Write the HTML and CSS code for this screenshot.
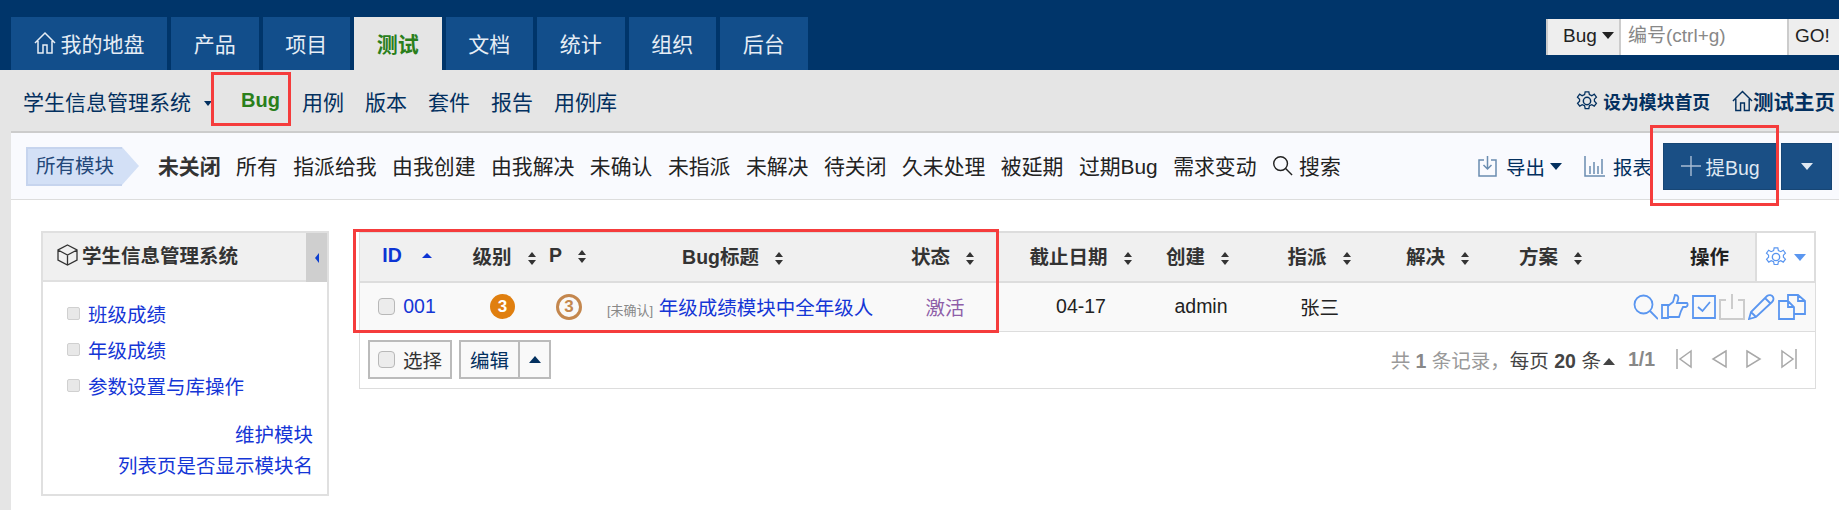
FILE: index.html
```html
<!DOCTYPE html>
<html>
<head>
    <meta charset="utf-8">
    <title>Bug列表</title>
    <link rel="stylesheet" href="styles.css">
</head>
<body>
    <header class="topbar">
        <nav class="tabs">
            <a class="tab tab-first">
                <svg class="ico" width="22" height="24" viewBox="0 0 22 24"><path d="M1 12 11 2l10 10M4 10v12h5v-8h4v8h5V10" fill="none" stroke="currentColor" stroke-width="1.5"/></svg>
                我的地盘
            </a>
            <a class="tab">产品</a>
            <a class="tab">项目</a>
            <a class="tab active">测试</a>
            <a class="tab">文档</a>
            <a class="tab">统计</a>
            <a class="tab">组织</a>
            <a class="tab">后台</a>
        </nav>
        <div class="quick-search">
            <div class="qs-type">Bug <i class="caret"></i></div>
            <div class="qs-input">编号(ctrl+g)</div>
            <div class="qs-go">GO!</div>
        </div>
    </header>

    <div class="subnav">
        <div class="subnav-left">
            <a class="product-name">学生信息管理系统 <i class="caret caret-small"></i></a>
            <a class="sub-bug">Bug</a>
            <a>用例</a>
            <a>版本</a>
            <a>套件</a>
            <a>报告</a>
            <a>用例库</a>
        </div>
        <div class="subnav-right">
            <a class="set-home">
                <svg width="22" height="22" viewBox="0 0 24 24"><circle cx="12" cy="12" r="4" fill="none" stroke="currentColor" stroke-width="1.6"/><path d="M10 2h4l.6 3 2.6 1.2 2.7-1.6 2.4 3.2-2.2 2.2v2.2l2.2 2.2-2.4 3.2-2.7-1.6-2.6 1.2-.6 3h-4l-.6-3-2.6-1.2-2.7 1.6-2.4-3.2 2.2-2.2V10L1.600 7.800 4 4.600l2.700 1.600L9.400 5z" fill="none" stroke="currentColor" stroke-width="1.4"/></svg>
                设为模块首页
            </a>
            <a class="test-home">
                <svg width="21" height="24" viewBox="0 0 22 24"><path d="M1 12 11 2l10 10M4 10v12h5v-8h4v8h5V10" fill="none" stroke="currentColor" stroke-width="1.5"/></svg>测试主页
            </a>
        </div>
    </div>

    <div class="filterbar">
        <div class="module-label">所有模块</div>
        <div class="filters">
            <a class="current">未关闭</a>
            <a>所有</a>
            <a>指派给我</a>
            <a>由我创建</a>
            <a>由我解决</a>
            <a>未确认</a>
            <a>未指派</a>
            <a>未解决</a>
            <a>待关闭</a>
            <a>久未处理</a>
            <a>被延期</a>
            <a>过期Bug</a>
            <a>需求变动</a>
            <a class="search-link">
                <svg width="21" height="21" viewBox="0 0 22 22"><circle cx="9" cy="9" r="7.200" fill="none" stroke="currentColor" stroke-width="1.500"/><path d="m14 14 7 7" stroke="currentColor" stroke-width="1.500"/></svg>
                搜索
            </a>
        </div>
        <div class="actions">
            <a class="act">
                <svg class="act-ico" width="20" height="21" viewBox="0 0 20 21"><path d="M6 4H1v16h17V4h-5M9.500 0v12M5.500 9l4 4 4-4" fill="none" stroke="currentColor" stroke-width="1.500"/></svg>
                <span>导出</span><i class="caret"></i>
            </a>
            <a class="act act-report">
                <svg class="act-ico" width="21" height="21" viewBox="0 0 21 21"><path d="M1 0v20h20M6 10v8M10 6v12M14 10v8M18 3v15" fill="none" stroke="currentColor" stroke-width="1.500"/></svg>
                <span>报表</span>
            </a>
            <div class="btn-group">
                <a class="btn-create">
                    <svg class="plus" width="20" height="20" viewBox="0 0 20 20"><path d="M10 0v20M0 10h20" stroke="currentColor" stroke-width="1.400"/></svg>
                    提Bug
                </a>
                <a class="btn-more"><i class="caret caret-white"></i></a>
            </div>
        </div>
    </div>

    <main class="content">
        <aside class="side">
            <div class="side-head">
                <div class="side-title">
                    <svg width="21" height="22" viewBox="0 0 21 22"><path d="M10.500 1 20 6v10l-9.500 5L1 16V6zM1 6l9.500 5L20 6M10.500 11v10" fill="none" stroke="#333" stroke-width="1.300"/></svg>
                    学生信息管理系统
                </div>
                <div class="side-toggle"><i></i></div>
            </div>
            <ul class="tree">
                <li>班级成绩</li>
                <li>年级成绩</li>
                <li>参数设置与库操作</li>
            </ul>
            <div class="side-links">
                <a>维护模块</a>
                <a>列表页是否显示模块名</a>
            </div>
        </aside>

        <section class="list">
            <table class="bugs">
                <colgroup>
                    <col class="c-id"><col class="c-pri"><col class="c-p"><col class="c-title"><col class="c-status"><col class="c-date"><col class="c-create"><col class="c-assign"><col class="c-resolve"><col class="c-plan"><col class="c-act"><col class="c-set">
                </colgroup>
                <thead>
                    <tr>
                        <th class="th-id">ID<i class="sort-up"></i></th>
                        <th class="th-pri">级别<i class="sort"></i></th>
                        <th>P<i class="sort"></i></th>
                        <th>Bug标题<i class="sort"></i></th>
                        <th class="th-status">状态<i class="sort"></i></th>
                        <th>截止日期<i class="sort"></i></th>
                        <th class="th-create">创建<i class="sort"></i></th>
                        <th>指派<i class="sort"></i></th>
                        <th class="th-resolve">解决<i class="sort"></i></th>
                        <th class="th-plan">方案<i class="sort"></i></th>
                        <th class="th-act">操作</th>
                        <th class="th-set">
                            <svg width="22" height="24" viewBox="0 0 24 24"><circle cx="12" cy="12" r="4" fill="none" stroke="currentColor" stroke-width="1.500"/><path d="M10 2h4l.6 3 2.600 1.200 2.700-1.600 2.400 3.200-2.200 2.200v2.200l2.200 2.200-2.400 3.200-2.700-1.600-2.600 1.200-.6 3h-4l-.6-3-2.600-1.200-2.700 1.600-2.400-3.200 2.200-2.200V10L1.600 7.800 4 4.600l2.700 1.600L9.400 5z" fill="none" stroke="currentColor" stroke-width="1.300"/></svg>
                            <i class="caret caret-blue"></i>
                        </th>
                    </tr>
                </thead>
                <tbody>
                    <tr>
                        <td class="td-id"><span class="check"></span><a>001</a></td>
                        <td><span class="sev">3</span></td>
                        <td><span class="pri">3</span></td>
                        <td class="td-title"><small>[未确认]</small> <a>年级成绩模块中全年级人</a></td>
                        <td class="td-status">激活</td>
                        <td>04-17</td>
                        <td>admin</td>
                        <td>张三</td>
                        <td></td>
                        <td></td>
                        <td colspan="2" class="td-act">
                            <div class="row-acts">
                                <svg width="25" height="26" viewBox="0 0 25 26"><circle cx="10.500" cy="10.500" r="9" fill="none" stroke="currentColor" stroke-width="1.800"/><path d="m17 17 8 8" stroke="currentColor" stroke-width="1.800"/></svg>
                                <svg width="28" height="26" viewBox="0 0 28 26"><path d="M1 11h6v13H1zM7 12l5-4 2-7c3 0 4 2 3 5l-1 3h10c1 1 1 3-1 4h-3l-2 4-2 6H7" fill="none" stroke="currentColor" stroke-width="1.800"/></svg>
                                <svg width="24" height="26" viewBox="0 0 24 26"><path d="M1 2h22v22H1z" fill="none" stroke="currentColor" stroke-width="1.800"/><path d="m6 13 4.500 4L18 8" fill="none" stroke="currentColor" stroke-width="1.800"/></svg>
                                <svg class="off" width="26" height="26" viewBox="0 0 26 26"><path d="M7 6H1v19h24V6h-6M13 0v15" fill="none" stroke="currentColor" stroke-width="2"/></svg>
                                <svg width="27" height="26" viewBox="0 0 27 26"><path d="M1 25l2-7L19 2c2-1.500 5-1 6 1s1 3-1 5L8 23zM3 18l5 5M17 4l6 6" fill="none" stroke="currentColor" stroke-width="1.800"/></svg>
                                <svg width="28" height="26" viewBox="0 0 28 26"><path d="M1 7h9l6 6v12H1zM10 7v6h6M10 7V1h10l7 6v13H16M20 1v6h7" fill="none" stroke="currentColor" stroke-width="1.800"/></svg>
                            </div>
                        </td>
                    </tr>
                </tbody>
            </table>
            <div class="pager">
                <div class="batch">
                    <a class="b-btn b-select"><span class="check"></span>选择</a>
                    <div class="b-group">
                        <a class="b-btn b-edit">编辑</a>
                        <a class="b-btn b-up"><i class="caret-up"></i></a>
                    </div>
                </div>
                <div class="pages">
                    <span class="count">共 <b>1</b> 条记录，</span>
                    <span class="per">每页 <b>20</b> 条<i class="caret-up caret-up-gray"></i></span>
                    <b class="page-no">1/1</b>
                    <div class="page-nav">
                        <svg width="16" height="20" viewBox="0 0 16 20"><path d="M1 0v20M15 2 4 10l11 8z" fill="none" stroke="currentColor" stroke-width="1.500"/></svg>
                        <svg width="16" height="20" viewBox="0 0 16 20"><path d="M15 2 2 10l13 8z" fill="none" stroke="currentColor" stroke-width="1.500"/></svg>
                        <svg width="16" height="20" viewBox="0 0 16 20"><path d="M1 2l13 8-13 8z" fill="none" stroke="currentColor" stroke-width="1.500"/></svg>
                        <svg width="16" height="20" viewBox="0 0 16 20"><path d="M15 0v20M1 2l11 8-11 8z" fill="none" stroke="currentColor" stroke-width="1.500"/></svg>
                    </div>
                </div>
            </div>
        </section>
    </main>

    <!-- red marks drawn over the screenshot -->
    <div class="mark mark-bug"></div>
    <div class="mark mark-create"></div>
    <div class="mark mark-table"></div>
</body>
</html>
```

FILE: styles.css
```css
* {
    box-sizing: border-box;
}

html, body {
    height: 510px;
    overflow: hidden;
}

body {
    margin: 0;
    background: #e5e5e5;
    color: #333;
    font-family: "Liberation Sans", "Noto Sans CJK SC", sans-serif;
    font-size: 19.5px;
    position: relative;
}

a {
    color: inherit;
    text-decoration: none;
}

.caret {
    display: inline-block;
    width: 0;
    height: 0;
    border-left: 6px solid transparent;
    border-right: 6px solid transparent;
    border-top: 7px solid #03305f;
}

.caret-small {
    border-left-width: 4px;
    border-right-width: 4px;
    border-top-width: 5px;
    margin-left: 7px;
    vertical-align: middle;
}

.caret-white { border-top-color: #dfe8f2; }
.caret-blue { border-top-color: #5a96f0; margin-left: 2px; vertical-align: middle; }

/* top bar */
.topbar {
    height: 70px;
    background: #00356a;
    display: flex;
    justify-content: space-between;
}

.tabs {
    display: flex;
    gap: 4px;
    padding: 17px 0 0 11px;
}

.tab {
    width: 87.500px;
    height: 53px;
    padding-bottom: 2px;
    background: #124e8b;
    color: #e6edf5;
    font-size: 21px;
    display: flex;
    align-items: center;
    justify-content: center;
    gap: 5px;
}

.tab-first { width: 156px; }

.tab.active {
    background: #e5e5e5;
    color: #2a7f1b;
    font-weight: bold;
}

.quick-search {
    display: flex;
    width: 293px;
    height: 36px;
    margin-top: 19px;
    line-height: 34px;
    font-size: 19px;
    color: #222;
    background: #eee;
}

.qs-type {
    width: 73px;
    padding-left: 15px;
    border-left: 2px solid #ccc;
    white-space: nowrap;
}

.qs-type .caret {
    border-top-color: #222;
    vertical-align: 3px;
}

.qs-input {
    width: 168px;
    padding-left: 7px;
    background: #fff;
    color: #888;
    border-left: 2px solid #ccc;
    white-space: nowrap;
}

.qs-go {
    flex: 1;
    padding-left: 6px;
    border-left: 2px solid #ccc;
}

/* second level menu */
.subnav {
    height: 61px;
    padding: 0 4px 0 23px;
    display: flex;
    justify-content: space-between;
    align-items: center;
    color: #03305f;
}

.subnav-left {
    display: flex;
    align-items: center;
    gap: 21px;
    font-size: 21px;
}

.product-name {
    width: 197px;
    white-space: nowrap;
}

.sub-bug {
    width: 40px;
    color: #2a7f1b;
    font-size: 20px;
    font-weight: bold;
}

.subnav-right {
    display: flex;
    align-items: center;
    gap: 22px;
    font-weight: bold;
}

.subnav-right a {
    display: flex;
    align-items: center;
}

.set-home {
    font-size: 17.800px;
    gap: 5px;
}

.test-home {
    font-size: 20.500px;
}

/* filter bar */
.filterbar {
    margin-left: 11px;
    height: 69px;
    background: #f9fafe;
    border-top: 2px solid #ccc;
    border-bottom: 1px solid #ddd;
    display: flex;
    align-items: center;
    padding-left: 15px;
    position: relative;
}

.module-label {
    position: relative;
    width: 96px;
    height: 39px;
    line-height: 35px;
    padding-left: 8px;
    background: #d3e0f6;
    border: 2px solid #c6d4ee;
    border-right: none;
    color: #23487a;
    flex: none;
}

.module-label::after {
    content: "";
    position: absolute;
    left: 94px;
    top: -2px;
    border-left: 17px solid #d3e0f6;
    border-top: 19.500px solid transparent;
    border-bottom: 19.500px solid transparent;
}

.filters {
    display: flex;
    align-items: center;
    gap: 15.500px;
    margin-left: 36px;
    padding-bottom: 2px;
    color: #222;
    font-size: 20.850px;
    white-space: nowrap;
}

.filters .current {
    font-weight: bold;
    color: #333;
}

.search-link {
    display: flex;
    align-items: center;
    gap: 6px;
}

.actions {
    margin-left: auto;
    display: flex;
    align-items: center;
    color: #03305f;
}

.act {
    display: flex;
    align-items: center;
    gap: 8px;
}

.act-ico {
    color: #6a8cb0;
}

.act .caret {
    margin-left: -3px;
}

.act-report {
    margin-left: 22px;
}

.btn-group {
    display: flex;
    gap: 5px;
    margin-left: 12px;
    margin-right: 8px;
}

.btn-create, .btn-more {
    height: 45px;
    background: #1a4f85;
    color: #dfe8f2;
    display: flex;
    align-items: center;
    justify-content: center;
    box-shadow: 0 0 0 1px #174675;
}

.btn-create {
    width: 113px;
    gap: 4px;
}

.plus {
    color: #a9bdd3;
}

.btn-more {
    width: 49px;
}

/* main area */
.content {
    margin-left: 11px;
    height: 311px;
    background: #fff;
    display: flex;
    align-items: flex-start;
    padding: 31px 0 0 30px;
}

.side {
    width: 288px;
    height: 265px;
    border: 2px solid #e0e0e0;
    flex: none;
}

.side-head {
    height: 49px;
    background: #f0f0f0;
    border-bottom: 2px solid #e0e0e0;
    display: flex;
    justify-content: space-between;
}

.side-title {
    display: flex;
    align-items: center;
    gap: 4px;
    padding: 0 0 4px 14px;
    font-weight: bold;
    white-space: nowrap;
}

.side-toggle {
    width: 21px;
    height: 49px;
    background: #cfcfcf;
    display: flex;
    align-items: center;
    justify-content: center;
}

.side-toggle i {
    border-right: 4px solid #0d3fcf;
    border-top: 5px solid transparent;
    border-bottom: 5px solid transparent;
}

.tree {
    list-style: none;
    margin: 15px 0 0;
    padding: 0 0 0 24px;
    color: #1536d6;
}

.tree li {
    height: 36px;
    line-height: 36px;
    padding-left: 21px;
    position: relative;
}

.tree li::before {
    content: "";
    position: absolute;
    left: 0;
    top: 10px;
    width: 11px;
    height: 11px;
    background: #e8e8e8;
    border: 1px solid #d0d0d0;
    border-radius: 2px;
}

.side-links {
    margin-top: 15px;
    padding-right: 14px;
    text-align: right;
    color: #1536d6;
    line-height: 31px;
}

.side-links a {
    display: block;
}

/* bug table */
.list {
    margin-left: 30px;
    width: 1457px;
    height: 158px;
    border: 1px solid #ddd;
    border-top: none;
}

.bugs {
    width: 1455px;
    table-layout: fixed;
    border-collapse: collapse;
}

.c-id { width: 94px; }
.c-pri { width: 95px; }
.c-p { width: 38px; }
.c-title { width: 292px; }
.c-status { width: 132px; }
.c-date { width: 140px; }
.c-create { width: 100px; }
.c-assign { width: 137px; }
.c-resolve { width: 104px; }
.c-plan { width: 114px; }
.c-act { width: 150px; }
.c-set { width: 59px; }

.bugs th {
    height: 50px;
    padding: 0 0 4px;
    background: #f0f0f0;
    border-top: 2px solid #ddd;
    border-bottom: 2px solid #ddd;
    font-weight: bold;
    white-space: nowrap;
    color: #333;
}

.bugs .th-id {
    color: #0d34d4;
}

.bugs .th-pri {
    padding-left: 6px;
}

.bugs .th-status {
    padding-right: 4px;
}

.bugs .th-create {
    padding-right: 6px;
}

.bugs .th-resolve {
    padding-right: 4px;
}

.bugs .th-plan {
    padding-left: 4px;
}

.bugs .th-act {
    text-align: right;
    padding-right: 26px;
    color: #222;
}

.bugs .th-set {
    padding: 0;
    background: #fff;
    border: 2px solid #ddd;
    color: #5a96f0;
    text-align: center;
}

.th-set svg {
    vertical-align: middle;
}

.sort {
    display: inline-block;
    width: 9px;
    height: 13px;
    margin-left: 16px;
    vertical-align: -1px;
    position: relative;
}

.sort::before, .sort::after {
    content: "";
    position: absolute;
    left: 0;
    border-left: 4.500px solid transparent;
    border-right: 4.500px solid transparent;
}

.sort::before {
    top: 0;
    border-bottom: 5px solid #333;
}

.sort::after {
    bottom: 0;
    border-top: 5px solid #333;
}

.sort-up {
    display: inline-block;
    margin-left: 20px;
    vertical-align: 4px;
    border-left: 5px solid transparent;
    border-right: 5px solid transparent;
    border-bottom: 5px solid #0d34d4;
}

.bugs td {
    height: 49px;
    padding: 0;
    background: #f9f9f9;
    border-bottom: 1px solid #ddd;
    text-align: center;
    color: #222;
    white-space: nowrap;
}

.td-id a {
    color: #1536d6;
}

.check {
    display: inline-block;
    width: 17px;
    height: 17px;
    margin-right: 8px;
    background: #ececec;
    border: 1px solid #b8b8b8;
    border-radius: 4px;
    vertical-align: -2px;
}

.sev, .pri {
    display: inline-flex;
    align-items: center;
    justify-content: center;
    border-radius: 50%;
    margin-left: 2px;
    line-height: 1;
}

.sev {
    width: 25px;
    height: 25px;
    background: #e07f0f;
    color: #fff;
    font-size: 17px;
    font-weight: bold;
}

.pri {
    width: 26px;
    height: 26px;
    border: 3px solid #c4874e;
    color: #c4874e;
    font-size: 17px;
    font-weight: bold;
}

.bugs .td-title {
    text-align: left;
    padding-left: 20px;
    color: #1536d6;
}

.td-title small {
    font-size: 13px;
    color: #888;
}

.bugs .td-status {
    color: #8e5ea8;
}

.bugs .td-act {
    padding-right: 9px;
    color: #5a96f0;
}

.row-acts {
    display: flex;
    justify-content: flex-end;
    gap: 3px;
}

.row-acts .off {
    color: #ccc;
}

/* pager */
.pager {
    display: flex;
    justify-content: space-between;
    align-items: center;
    height: 57px;
    padding: 0 18px 2px 8px;
}

.batch {
    display: flex;
    gap: 7px;
}

.b-group {
    display: flex;
}

.b-btn {
    height: 39px;
    background: #f9f9f9;
    border: 2px solid #bbb;
    display: flex;
    align-items: center;
    justify-content: center;
    color: #03305f;
}

.b-select {
    width: 84px;
    color: #333;
}

.b-edit {
    width: 61px;
}

.b-up {
    width: 31px;
    border-left: none;
}

.caret-up {
    display: inline-block;
    border-left: 6px solid transparent;
    border-right: 6px solid transparent;
    border-bottom: 7px solid #03305f;
}

.caret-up-gray {
    border-bottom-color: #444;
    margin-left: 2px;
    vertical-align: 3px;
}

.pages {
    display: flex;
    align-items: center;
    white-space: nowrap;
}

.count {
    color: #999;
}

.count b {
    color: #888;
}

.per {
    color: #444;
}

.page-no {
    margin-left: 13px;
    color: #888;
}

.page-nav {
    display: flex;
    gap: 19px;
    margin-left: 21px;
    color: #a8a8a8;
}

/* annotations */
.mark {
    position: absolute;
    border: 3px solid #f53c3c;
    pointer-events: none;
}

.mark-bug {
    left: 211px;
    top: 72px;
    width: 80px;
    height: 54px;
}

.mark-create {
    left: 1650px;
    top: 125px;
    width: 129px;
    height: 81px;
}

.mark-table {
    left: 353px;
    top: 229px;
    width: 646px;
    height: 104px;
}
```
